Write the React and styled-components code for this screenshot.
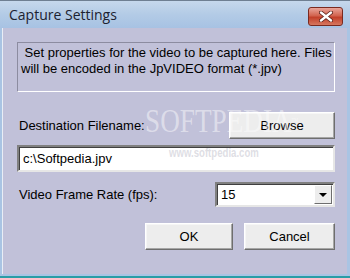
import React from 'react';
import styled, { createGlobalStyle } from 'styled-components';

const GlobalStyle = createGlobalStyle`
  html, body {
    margin: 0;
    padding: 0;
    background: #c1c1d9;
  }
  * {
    box-sizing: border-box;
  }
`;

const Window = styled.div`
  position: relative;
  width: 350px;
  height: 278px;
  display: flex;
  flex-direction: column;
  background: #a9c4e3;
  border-bottom: 2px solid #2a9da6;
  overflow: hidden;
`;

const TitleBar = styled.div`
  height: 28px;
  flex: none;
  display: flex;
  align-items: center;
  justify-content: space-between;
  padding: 0 7px 0 9px;
  background: linear-gradient(#c6d8ec, #b3cbe6 50%, #a7c2e3);
  border-top: 1px solid #6f7f92;
`;

const Title = styled.span`
  font-family: 'Open Sans', 'Noto Sans', sans-serif;
  font-size: 14px;
  color: #1c2230;
  margin-top: -1px;
`;

const CloseButton = styled.div`
  width: 35px;
  height: 19px;
  border-radius: 3px;
  border: 1px solid #7a2a20;
  background: linear-gradient(#e9a59a, #d2644f 45%, #c2402a 55%, #d6775f);
  display: flex;
  align-items: center;
  justify-content: center;
  margin-top: 4px;
`;

const Client = styled.div`
  flex: 1;
  margin: 0 3px 2px 2px;
  background: #c1c1d9;
  border-left: 1px solid #e8eef6;
  display: flex;
  flex-direction: column;
  padding: 14px 12px 0 14px;
  font-family: 'Liberation Sans', Arial, sans-serif;
  font-size: 13px;
  color: #000;
`;

const InfoBox = styled.div`
  height: 50px;
  border: 1px solid;
  border-color: #8c8ca0 #ffffff #ffffff #8c8ca0;
  padding: 2px 2px 0 3px;
  line-height: 16px;
`;

const Row = styled.div`
  display: flex;
  align-items: center;
  justify-content: space-between;
  margin-top: ${p => p.$top}px;
  height: ${p => p.$h}px;
`;

const Label = styled.span`
  padding-left: 2px;
`;

const Button = styled.button`
  width: ${p => p.$w}px;
  height: 27px;
  font-family: 'Liberation Sans', Arial, sans-serif;
  font-size: 13px;
  color: #000;
  background: #ededed;
  border: 1px solid;
  border-color: #ffffff #6e6e6e #6e6e6e #ffffff;
  box-shadow: inset -1px -1px 0 #a6a6a6, inset 1px 1px 0 #f6f6f6;
  padding: 0;
`;

const TextInput = styled.div`
  margin-top: 7px;
  height: 27px;
  background: #fff;
  border: 2px solid;
  border-color: #808080 #e6e6e6 #e6e6e6 #808080;
  box-shadow: inset 1px 1px 0 #404040;
  display: flex;
  align-items: center;
  padding-left: 4px;
`;

const Select = styled.div`
  width: 120px;
  height: 25px;
  background: #fff;
  border: 2px solid;
  border-color: #808080 #e6e6e6 #e6e6e6 #808080;
  box-shadow: inset 1px 1px 0 #404040;
  display: flex;
  align-items: center;
  justify-content: space-between;
  padding: 1px 1px 1px 4px;
`;

const DropButton = styled.div`
  width: 18px;
  height: 19px;
  background: #ededed;
  border: 1px solid;
  border-color: #ffffff #6e6e6e #6e6e6e #ffffff;
  display: flex;
  align-items: center;
  justify-content: center;
`;

const Arrow = styled.div`
  width: 0;
  height: 0;
  border-left: 4px solid transparent;
  border-right: 4px solid transparent;
  border-top: 4px solid #000;
`;

const Actions = styled.div`
  display: flex;
  justify-content: flex-end;
  gap: 11px;
  margin-top: 16px;
`;

const Watermark = styled.div`
  position: absolute;
  left: 145px;
  top: 104px;
  width: 190px;
  pointer-events: none;
  color: rgba(255, 255, 255, 0.45);
  font-family: 'Liberation Serif', 'Times New Roman', serif;
  transform: scaleX(0.8);
  transform-origin: left top;
`;

const Brand = styled.div`
  font-size: 34px;
  line-height: 34px;
  white-space: nowrap;
`;

const Site = styled.div`
  font-family: 'Liberation Sans', Arial, sans-serif;
  font-size: 12px;
  font-weight: bold;
  color: rgba(200, 200, 210, 0.6);
  margin: 8px 0 0 30px;
  white-space: nowrap;
`;

const Tm = styled.span`
  font-size: 9px;
  vertical-align: top;
`;

export default function App() {
  return (
    <>
      <GlobalStyle />
      <Window>
        <TitleBar>
          <Title>Capture Settings</Title>
          <CloseButton>
            <svg width="14" height="11" viewBox="0 0 14 11">
              <path d="M2 1.5 L12 9.5 M12 1.5 L2 9.5" stroke="#5a2018" strokeWidth="4" strokeLinecap="round" />
              <path d="M2 1.5 L12 9.5 M12 1.5 L2 9.5" stroke="#ffffff" strokeWidth="2.4" strokeLinecap="round" />
            </svg>
          </CloseButton>
        </TitleBar>
        <Client>
          <InfoBox>
            &nbsp;Set properties for the video to be captured here. Files will be encoded in the JpVIDEO format (*.jpv)
          </InfoBox>
          <Row $top={20} $h={26}>
            <Label>Destination Filename:</Label>
            <Button $w={106}>Browse</Button>
          </Row>
          <TextInput>c:\Softpedia.jpv</TextInput>
          <Row $top={10} $h={25}>
            <Label>Video Frame Rate (fps):</Label>
            <Select>
              <span>15</span>
              <DropButton>
                <Arrow />
              </DropButton>
            </Select>
          </Row>
          <Actions>
            <Button $w={88}>OK</Button>
            <Button $w={91}>Cancel</Button>
          </Actions>
        </Client>
        <Watermark>
          <Brand>SOFTPEDIA<Tm>™</Tm></Brand>
          <Site>www.softpedia.com</Site>
        </Watermark>
      </Window>
    </>
  );
}
